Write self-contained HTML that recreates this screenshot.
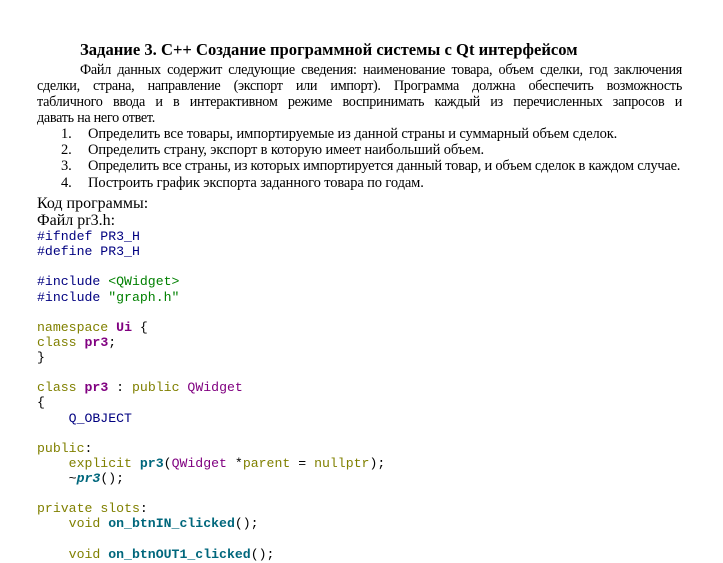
<!DOCTYPE html>
<html><head><meta charset="utf-8"><style>
body{margin:0;width:723px;height:563px;background:#fff;overflow:hidden;position:relative;font-family:"Liberation Serif","Noto Serif CJK SC",serif;color:#000}
.a{position:absolute;white-space:nowrap}
.t{left:80px;top:40px;font-size:16.6px;font-weight:bold}
.pl{position:absolute;font-size:14.2px;text-align:justify;text-align-last:justify;white-space:nowrap;letter-spacing:-0.3px}
.li{font-size:14.5px;letter-spacing:-0.12px}
.n{left:61px}.li2{left:88px}
.h{font-size:16px;left:37px}
pre{position:absolute;left:37px;top:229px;margin:0;font-family:"Liberation Mono",monospace;font-size:13.2px;line-height:15.13px;color:#000080}
.k{color:#808000}.u{color:#800080;font-weight:bold}.q{color:#800080}.s{color:#008000}.f{color:#00677c;font-weight:bold}.o{color:#000}
</style></head><body>
<div class="a t">Задание 3. С++ Создание программной системы с Qt интерфейсом</div>
<div class="pl" style="left:80px;width:602px;top:62px">Файл данных содержит следующие сведения: наименование товара, объем сделки, год заключения</div>
<div class="pl" style="left:37px;width:645px;top:78px">сделки, страна, направление (экспорт или импорт). Программа должна обеспечить возможность</div>
<div class="pl" style="left:37px;width:645px;top:94px">табличного ввода и в интерактивном режиме воспринимать каждый из перечисленных запросов и</div>
<div class="a" style="left:37px;top:110px;font-size:14.2px;letter-spacing:-0.3px">давать на него ответ.</div>
<div class="a li n" style="top:126px">1.</div><div class="a li li2" style="top:126px">Определить все товары, импортируемые из данной страны и суммарный объем сделок.</div>
<div class="a li n" style="top:142px">2.</div><div class="a li li2" style="top:142px">Определить страну, экспорт в которую имеет наибольший объем.</div>
<div class="a li n" style="top:158px">3.</div><div class="a li li2" style="top:158px;letter-spacing:-0.25px">Определить все страны, из которых импортируется данный товар, и объем сделок в каждом случае.</div>
<div class="a li n" style="top:175px">4.</div><div class="a li li2" style="top:175px">Построить график экспорта заданного товара по годам.</div>
<div class="a h" style="top:195px">Код программы:</div>
<div class="a h" style="top:212px">Файл pr3.h:</div>
<pre>#ifndef PR3_H
#define PR3_H

#include <span class="s">&lt;QWidget&gt;</span>
#include <span class="s">"graph.h"</span>

<span class="k">namespace</span> <span class="u">Ui</span> <span class="o">{</span>
<span class="k">class</span> <span class="u">pr3</span><span class="o">;</span>
<span class="o">}</span>

<span class="k">class</span> <span class="u">pr3</span> <span class="o">:</span> <span class="k">public</span> <span class="q">QWidget</span>
<span class="o">{</span>
    Q_OBJECT

<span class="k">public</span><span class="o">:</span>
    <span class="k">explicit</span> <span class="f">pr3</span><span class="o">(</span><span class="q">QWidget</span> <span class="o">*</span><span class="k">parent</span> <span class="o">=</span> <span class="k">nullptr</span><span class="o">);</span>
    <span class="o">~</span><span class="f"><i>pr3</i></span><span class="o">();</span>

<span class="k">private</span> <span class="k">slots</span><span class="o">:</span>
    <span class="k">void</span> <span class="f">on_btnIN_clicked</span><span class="o">();</span>

    <span class="k">void</span> <span class="f">on_btnOUT1_clicked</span><span class="o">();</span></pre>
</body></html>
